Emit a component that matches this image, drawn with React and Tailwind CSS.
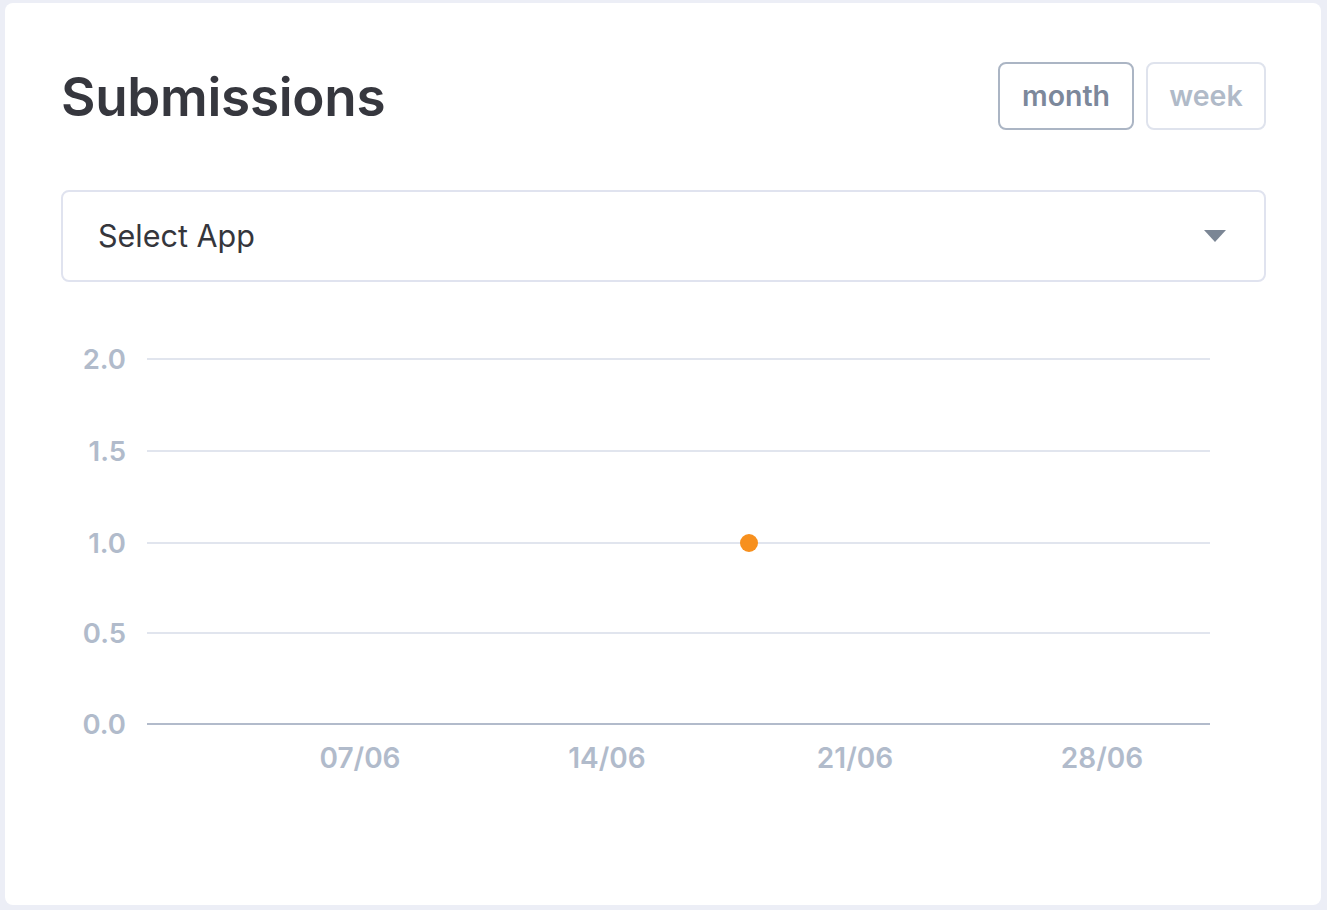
import React from "react";

const Y_TICKS = [
  { label: "2.0", y: 359 },
  { label: "1.5", y: 451 },
  { label: "1.0", y: 543 },
  { label: "0.5", y: 633 },
];

const X_TICKS = [
  { label: "07/06", x: 360 },
  { label: "14/06", x: 607 },
  { label: "21/06", x: 855 },
  { label: "28/06", x: 1102 },
];

// le graphique est dessiné en coordonnées de la page, décalé par la carte
function Chart() {
  const ox = 61;
  const oy = 300;
  return (
    <svg width="1205" height="520" className="block" style={{ fontFamily: "Inter, 'Noto Sans', sans-serif" }}>
      <g transform={`translate(${-ox} ${-oy})`}>
        {Y_TICKS.map((t) => (
          <g key={t.label}>
            <line x1="147" x2="1210" y1={t.y} y2={t.y} stroke="#e1e5ee" strokeWidth="2" />
            <text x="126" y={t.y + 10} textAnchor="end" fontSize="27.5" fontWeight="600" fill="#b1bbcb">
              {t.label}
            </text>
          </g>
        ))}
        <line x1="147" x2="1210" y1="724" y2="724" stroke="#b2bbcb" strokeWidth="2" />
        <text x="126" y="734" textAnchor="end" fontSize="27.5" fontWeight="600" fill="#b1bbcb">
          0.0
        </text>
        {X_TICKS.map((t) => (
          <text key={t.label} x={t.x} y="768" textAnchor="middle" fontSize="28" fontWeight="600" fill="#b1bbcb">
            {t.label}
          </text>
        ))}
        <circle cx="749" cy="543" r="9" fill="#f7901e" />
      </g>
    </svg>
  );
}

export default function App() {
  return (
    <div className="min-h-screen bg-[#eceef6] pl-[5px] pt-[3px]" style={{ fontFamily: "Inter, 'Noto Sans', sans-serif" }}>
      <div className="w-[1316px] h-[902px] bg-white rounded-[8px] pl-[56px] pr-[55px] pt-[59px]">
        <div className="flex items-start justify-between">
          <h1 className="text-[53px] leading-[70px] font-semibold text-[#36373e] tracking-[-0.3px]">Submissions</h1>
          <div className="flex gap-[12px]">
            <button className="w-[136px] h-[68px] rounded-[8px] border-2 border-[#abb5c4] text-[28.5px] font-semibold text-[#7c889b]">
              month
            </button>
            <button className="w-[120px] h-[68px] rounded-[8px] border-2 border-[#dfe3ed] text-[28.5px] font-semibold text-[#b0bac8]">
              week
            </button>
          </div>
        </div>
        <div className="mt-[58px] h-[92px] rounded-[8px] border-2 border-[#e0e3ef] flex items-center justify-between pl-[35px] pr-[38px]">
          <span className="text-[30.5px] text-[#35363c]">Select App</span>
          <svg width="22" height="12" viewBox="0 0 22 12">
            <path d="M0 0 H22 L11 12 Z" fill="#7b8695" />
          </svg>
        </div>
        <div className="mt-[18px]">
          <Chart />
        </div>
      </div>
    </div>
  );
}
